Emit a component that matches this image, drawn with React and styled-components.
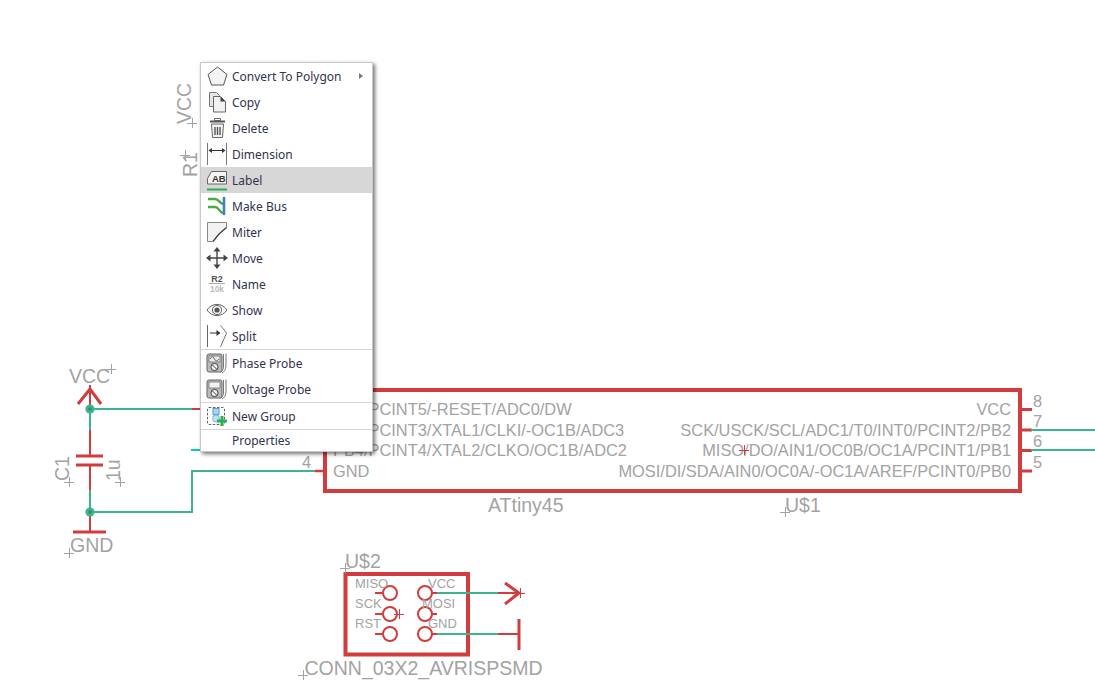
import React from "react";
import styled, { createGlobalStyle } from "styled-components";

const Global = createGlobalStyle`
  html, body { margin: 0; padding: 0; background: #fff; }
`;

const RED = "#d23c3c";
const GREEN = "#3cb48c";

const Canvas = styled.div`
  position: relative;
  width: 1095px;
  height: 684px;
  overflow: hidden;
  background: #fff;
`;

const Sheet = styled.svg`
  display: block;
`;

const Label = styled.text`
  font-family: "Liberation Sans", Arial, sans-serif;
  font-size: ${(p) => p.$size || 16.4}px;
  fill: #a3a3a3;
`;

const Menu = styled.div`
  position: absolute;
  left: 200px;
  top: 62px;
  width: 171px;
  background: #fff;
  border: 1px solid #c9c9c9;
  box-shadow: 2px 2px 4px rgba(0, 0, 0, 0.55);
  font-family: "Noto Sans", Tahoma, sans-serif;
  font-size: 12px;
  color: #33334d;
`;

const Section = styled.div`
  border-bottom: ${(p) => (p.$last ? "none" : "1px solid #d6d6d6")};
`;

const Row = styled.div`
  display: flex;
  align-items: center;
  height: ${(p) => p.$h || 26}px;
  padding-left: 5px;
  background: ${(p) => (p.$active ? "#d7d7d7" : "transparent")};
`;

const IconBox = styled.span`
  display: flex;
  flex: none;
  width: 22px;
  height: 22px;
  margin-right: 4px;
`;

const Text = styled.span`
  flex: 1;
  white-space: nowrap;
`;

const Arrow = styled.span`
  width: 0;
  height: 0;
  margin-right: 9px;
  border-left: 4px solid #777;
  border-top: 3px solid transparent;
  border-bottom: 3px solid transparent;
`;

const Ico = ({ children }) => (
  <svg width="22" height="22" viewBox="0 0 22 22" fill="none">
    {children}
  </svg>
);

const icons = {
  polygon: (
    <Ico>
      <path d="M11.500 2 21 9.500 17.500 20H5.500L2 9.500Z" fill="#f4f4f4" stroke="#555" strokeWidth="1" />
    </Ico>
  ),
  copy: (
    <Ico>
      <path d="M3.500 1.500h7l3 3v11h-10Z" fill="#e6e6e6" stroke="#777" />
      <path d="M7.500 5.500h7l5 5v10.500h-12Z" fill="#f2f2f2" stroke="#666" />
      <path d="M14.500 5.500v5h5Z" fill="#444" />
    </Ico>
  ),
  trash: (
    <Ico>
      <path d="M8.500 1.500h6v2h-6Z" stroke="#666" />
      <path d="M4 4.500h15" stroke="#555" strokeWidth="2" />
      <path d="M5.500 7h12l-1 13.500h-10Z" fill="#f4f4f4" stroke="#666" />
      <path d="M9 10v8M11.500 10v8M14 10v8" stroke="#555" strokeWidth="1.400" />
    </Ico>
  ),
  dimension: (
    <Ico>
      <path d="M1.500 0v22M20.500 0v22" stroke="#777" />
      <path d="M4 7.500h14" stroke="#333" />
      <path d="M2.500 7.500 6 5v5ZM19.500 7.500 16 5v5Z" fill="#333" />
    </Ico>
  ),
  label: (
    <Ico>
      <path d="M5.500 2.500h15v12.500h-19V9.500Z" fill="#f4f4f4" stroke="#666" />
      <text x="6" y="12.500" fontFamily="Liberation Sans" fontWeight="700" fontSize="9.500" fill="#333">AB</text>
      <path d="M1 20.500h20" stroke="#2fae55" strokeWidth="2" />
    </Ico>
  ),
  bus: (
    <Ico>
      <path d="M2 4H9C13 4 13 8 17 9M2 12H9C13 12 13 17 17 18" stroke="#45ad45" strokeWidth="2.400" />
      <path d="M18 3V19" stroke="#3d82c8" strokeWidth="2.600" strokeLinecap="round" />
    </Ico>
  ),
  miter: (
    <Ico>
      <path d="M1.500 1.500h19v5L13 13l-6 7.500H1.500Z" fill="#f2f2f2" stroke="#888" />
      <path d="M7 20.500 13 13l7.500-6.500" stroke="#444" strokeWidth="1.300" />
    </Ico>
  ),
  move: (
    <Ico>
      <path d="M11 3v16M3 11h16" stroke="#444" strokeWidth="1.400" />
      <path d="M11 0l3.500 4.500h-7ZM11 22l3.500-4.500h-7ZM0 11l4.500-3.500v7ZM22 11l-4.500-3.500v7Z" fill="#444" />
    </Ico>
  ),
  name: (
    <Ico>
      <text x="11" y="9" textAnchor="middle" fontFamily="Liberation Sans" fontWeight="700" fontSize="9" fill="#555">R2</text>
      <path d="M3 10.500h16" stroke="#aaa" />
      <text x="11" y="19" textAnchor="middle" fontFamily="Liberation Sans" fontWeight="700" fontSize="8.500" fill="#bbb">10k</text>
    </Ico>
  ),
  eye: (
    <Ico>
      <path d="M1 11c5-7.500 15-7.500 20 0-5 7.500-15 7.500-20 0Z" fill="#f6f6f6" stroke="#666" />
      <circle cx="11" cy="11" r="4.600" stroke="#666" />
      <circle cx="11" cy="11" r="2.600" fill="#555" />
    </Ico>
  ),
  split: (
    <Ico>
      <path d="M1.500 0v22" stroke="#666" />
      <path d="M4 8h8" stroke="#333" />
      <path d="M14.500 8 10.500 5v6Z" fill="#333" />
      <path d="M14.500 0.500 20.500 8 14.500 22" stroke="#777" />
    </Ico>
  ),
  phase: (
    <Ico>
      <rect x="1" y="2" width="15" height="18" rx="2" fill="#bbb" stroke="#666" />
      <rect x="3" y="4" width="11" height="6" fill="#e8e8e8" stroke="#666" strokeWidth="0.700" />
      <path d="M4 7c2-3 3-3 4.500 0s3 2 4.500 0" stroke="#444" strokeWidth="0.800" />
      <circle cx="8.500" cy="15" r="3.600" fill="#eee" stroke="#444" />
      <path d="M6 12.500l5 5" stroke="#444" />
      <path d="M17.500 2v12c0 3-1 5-3 6M20 1.500v12c0 4-2 6.500-4 7.500" stroke="#777" />
    </Ico>
  ),
  voltage: (
    <Ico>
      <rect x="1" y="2" width="15" height="18" rx="2" fill="#bbb" stroke="#666" />
      <rect x="3" y="4" width="11" height="6" fill="#f2f2f2" stroke="#666" strokeWidth="0.700" />
      <circle cx="8.500" cy="15" r="3.600" fill="#eee" stroke="#444" />
      <path d="M6 12.500l5 5" stroke="#444" />
      <path d="M17.500 2v12c0 3-1 5-3 6M20 1.500v12c0 4-2 6.500-4 7.500" stroke="#777" />
    </Ico>
  ),
  group: (
    <Ico>
      <rect x="1.500" y="2.500" width="17" height="17" rx="1.500" stroke="#666" strokeDasharray="2.500 1.500" />
      <rect x="7" y="3.500" width="6" height="6" fill="#a9d3ec" stroke="#5a9fd0" />
      <circle cx="10" cy="13.500" r="3.500" fill="#bfe0f2" stroke="#7fb6d8" />
      <path d="M16 11v10M11 16h10" stroke="#2fae55" strokeWidth="3" />
    </Ico>
  ),
};

const sections = [
  [
    { name: "Convert To Polygon", icon: "polygon", more: true },
    { name: "Copy", icon: "copy" },
    { name: "Delete", icon: "trash" },
    { name: "Dimension", icon: "dimension" },
    { name: "Label", icon: "label", active: true },
    { name: "Make Bus", icon: "bus" },
    { name: "Miter", icon: "miter" },
    { name: "Move", icon: "move" },
    { name: "Name", icon: "name" },
    { name: "Show", icon: "eye" },
    { name: "Split", icon: "split" },
  ],
  [
    { name: "Phase Probe", icon: "phase" },
    { name: "Voltage Probe", icon: "voltage" },
  ],
  [{ name: "New Group", icon: "group" }],
  [{ name: "Properties", h: 21 }],
];

const Wire = ({ d, color = RED, w = 2 }) => <path d={d} stroke={color} strokeWidth={w} fill="none" />;

const Plus = ({ x, y, color = "#a3a3a3", r = 5 }) => (
  <path d={`M${x - r} ${y}h${r * 2}M${x} ${y - r}v${r * 2}`} stroke={color} strokeWidth="1" fill="none" shapeRendering="crispEdges" />
);

const Junction = ({ x, y }) => (
  <g>
    <circle cx={x} cy={y} r="4.600" fill={GREEN} />
    <circle cx={x} cy={y} r="1.800" fill="#2a8f6e" />
  </g>
);

const Schematic = () => (
  <Sheet width="1095" height="684" viewBox="0 0 1095 684">
    {/* power section */}
    <Wire d="M90 385V430M90 430V456M90 465V532" />
    <Wire d="M90 409V430M90 490V512" color={GREEN} />
    <Wire d="M78 404 90 389 101 404" w={3} />
    <Wire d="M76 456H103M76 465H103M73 532H106" w={3} />
    <Wire d="M90 409H192" color={GREEN} />
    <Wire d="M192 409H202" />
    <Wire d="M191 450H202" color="#00d0b0" />
    <Wire d="M90 512H192V471H315" color={GREEN} />
    <Wire d="M315 471H325" w={2.500} />
    <Junction x={90} y={409} />
    <Junction x={90} y={512} />
    <Label x="69" y="383" $size={19.500}>VCC</Label>
    <Label x="70" y="552" $size={19.500}>GND</Label>
    <Label x="0" y="0" $size={19.500} transform="translate(69 481) rotate(-90)">C1</Label>
    <Label x="0" y="0" $size={19.500} transform="translate(120 481) rotate(-90)">1u</Label>
    <Label x="0" y="0" $size={19.500} transform="translate(191 124) rotate(-90)">VCC</Label>
    <Label x="0" y="0" $size={19.500} transform="translate(197 177) rotate(-90)">R1</Label>
    <Plus x={111} y={369} />
    <Plus x={69} y={553} />
    <Plus x={69} y={482} />
    <Plus x={120} y={482} />
    <Plus x={192} y={123} />
    <Plus x={185} y={155} />

    {/* ATtiny45 */}
    <rect x="325" y="390" width="695" height="101" fill="none" stroke={RED} strokeWidth="4" />
    <Wire d="M1020 409.500H1032M1020 430H1032M1020 450.500H1032M1020 471H1032" w={3} />
    <Wire d="M1031 430H1095M1031 450H1095" color={GREEN} />
    <Label x="333" y="415">PB5/PCINT5/-RESET/ADC0/DW</Label>
    <Label x="333" y="436">PB3/PCINT3/XTAL1/CLKI/-OC1B/ADC3</Label>
    <Label x="333" y="456">PB4/PCINT4/XTAL2/CLKO/OC1B/ADC2</Label>
    <Label x="333" y="477">GND</Label>
    <Label x="1011" y="415" textAnchor="end">VCC</Label>
    <Label x="1011" y="436" textAnchor="end">SCK/USCK/SCL/ADC1/T0/INT0/PCINT2/PB2</Label>
    <Label x="1011" y="456" textAnchor="end">MISO/DO/AIN1/OC0B/OC1A/PCINT1/PB1</Label>
    <Label x="1011" y="477" textAnchor="end">MOSI/DI/SDA/AIN0/OC0A/-OC1A/AREF/PCINT0/PB0</Label>
    <Label x="1033" y="407">8</Label>
    <Label x="1033" y="427">7</Label>
    <Label x="1033" y="447">6</Label>
    <Label x="1033" y="468">5</Label>
    <Label x="302" y="468">4</Label>
    <Label x="488" y="512" $size={19.500}>ATtiny45</Label>
    <Label x="785" y="512" $size={19.500}>U$1</Label>
    <Plus x={785} y={512} />
    <Plus x={744} y={450} color={RED} />

    {/* ISP header */}
    <rect x="345.500" y="574" width="122.500" height="80.500" fill="none" stroke={RED} strokeWidth="4" />
    {[593, 614, 634].map((y) => (
      <g key={y}>
        <circle cx="390" cy={y} r="7" fill="none" stroke={RED} strokeWidth="2" />
        <circle cx="425" cy={y} r="7" fill="none" stroke={RED} strokeWidth="2" />
        <Wire d={`M375 ${y}H382`} />
        <Wire d={`M432 ${y}H437`} />
      </g>
    ))}
    <Wire d="M437 593H498M437 634H498" color={GREEN} />
    <Wire d="M498 593H520M498 634H520" />
    <Wire d="M505 583 519 593 505 604" w={3} />
    <Wire d="M519 619V650" w={3} />
    <Plus x={520} y={593} color={RED} />
    <Plus x={399} y={614} color={RED} />
    <Label x="355" y="588" $size={13}>MISO</Label>
    <Label x="355" y="608" $size={13}>SCK</Label>
    <Label x="355" y="628" $size={13}>RST</Label>
    <Label x="428" y="588" $size={13}>VCC</Label>
    <Label x="422" y="608" $size={13}>MOSI</Label>
    <Label x="428" y="628" $size={13}>GND</Label>
    <Label x="345" y="568" $size={19.500}>U$2</Label>
    <Plus x={345} y={568} />
    <Label x="304.500" y="674.500" $size={19.500}>CONN_03X2_AVRISPSMD</Label>
    <Plus x={303} y={675} />
  </Sheet>
);

const App = () => (
  <Canvas>
    <Global />
    <Schematic />
    <Menu>
      {sections.map((items, i) => (
        <Section key={i} $last={i === sections.length - 1}>
          {items.map((item) => (
            <Row key={item.name} $active={item.active} $h={item.h}>
              <IconBox>{item.icon && icons[item.icon]}</IconBox>
              <Text>{item.name}</Text>
              {item.more && <Arrow />}
            </Row>
          ))}
        </Section>
      ))}
    </Menu>
  </Canvas>
);

export default App;
